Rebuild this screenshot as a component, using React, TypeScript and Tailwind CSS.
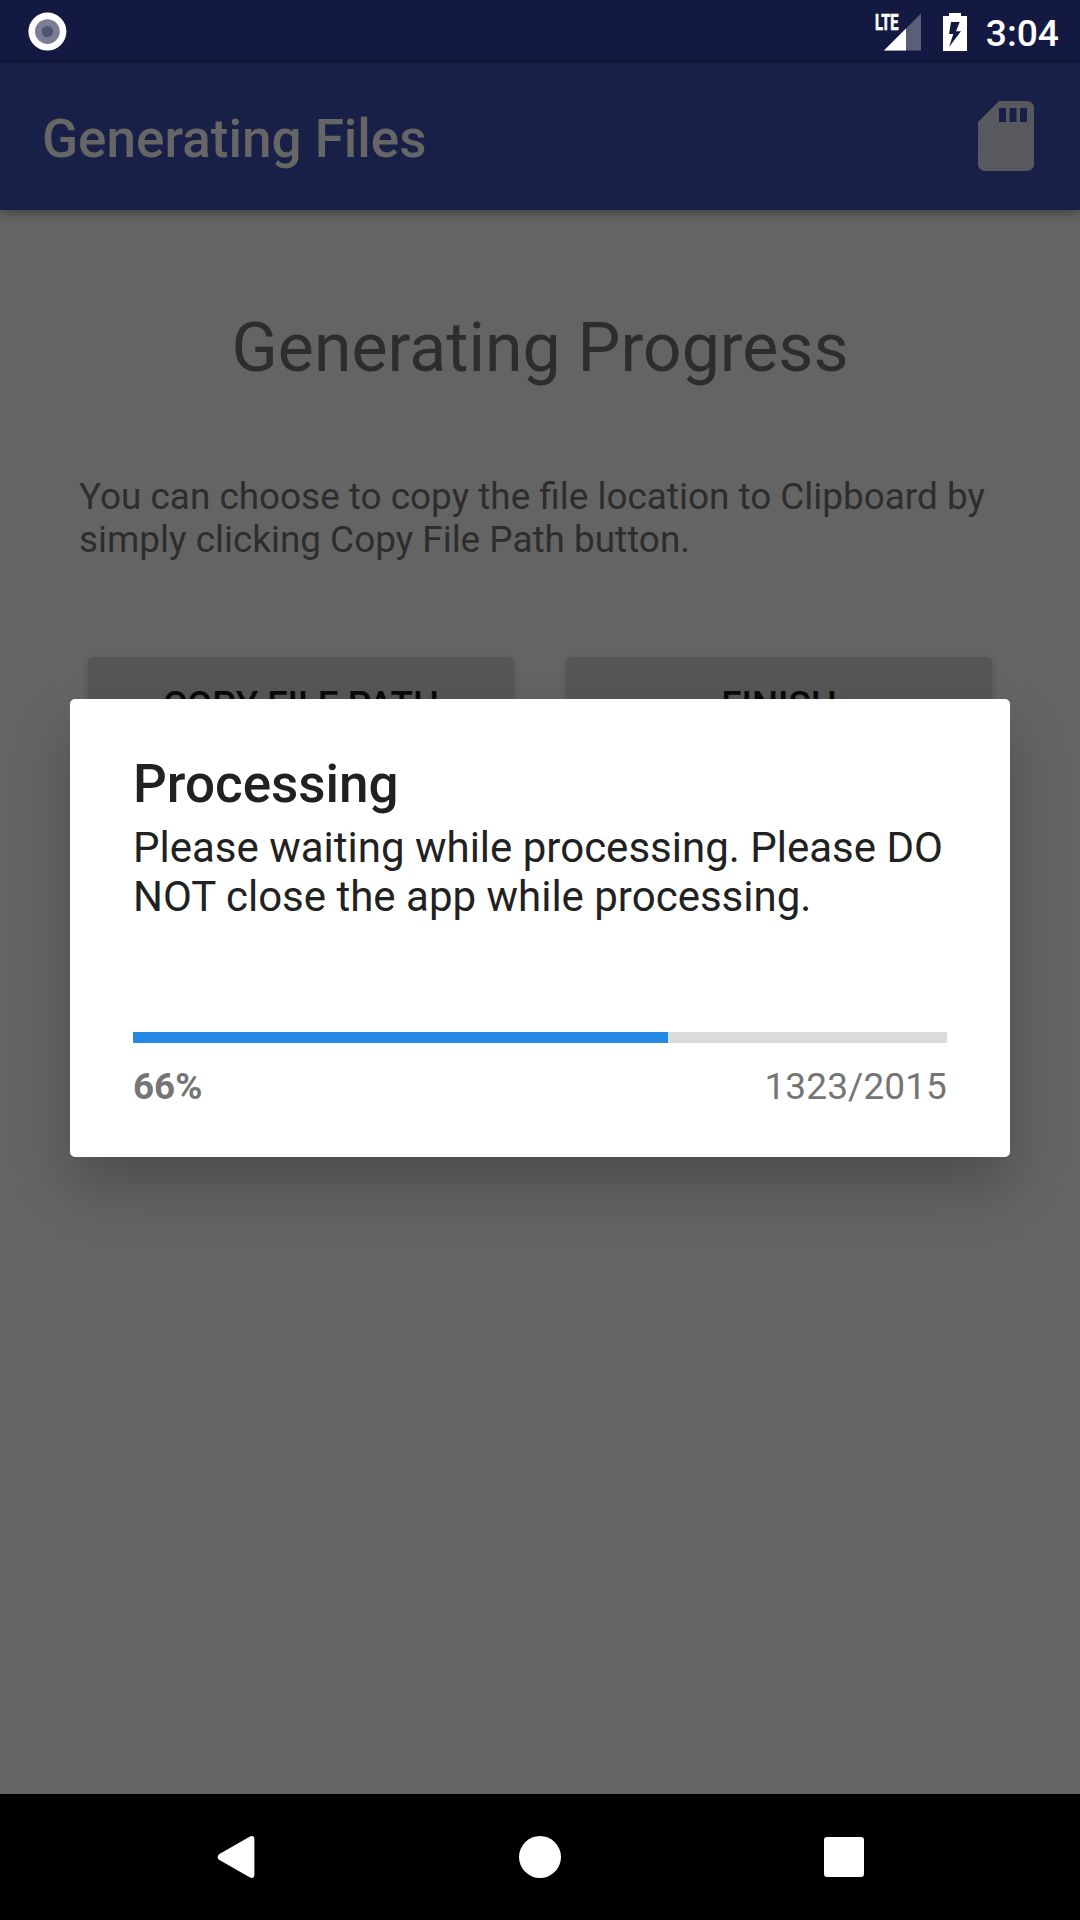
const done = 1323;
const total = 2015;

function StatusBar() {
  return (
    <div className="flex h-[63px] items-center justify-between bg-[#131940] pl-7 pr-[21px]">
      <svg className="h-[40px] w-[40px]" viewBox="0 0 40 40">
        <circle cx="19.4" cy="19.6" r="19" fill="#fff" />
        <circle cx="19.4" cy="19.6" r="12.4" fill="#7c7e96" />
        <circle cx="19.4" cy="19.6" r="5.7" fill="#515475" />
      </svg>
      <div className="flex h-full items-center">
        <svg className="mr-[22px] h-[54px] w-[46px] overflow-visible" viewBox="0 -8 46 54">
          <path d="M46 0.5V37.5H9Z" fill="#5a5e79" />
          <path d="M31 15.5V37.5H9Z" fill="#fff" />
          <text
            x="0"
            y="17.3"
            fill="#fff"
            stroke="#fff"
            strokeWidth="0.7"
            className="text-[22.5px] font-bold"
            transform="scale(0.65 1)"
          >
            LTE
          </text>
        </svg>
        <svg className="mr-[18.5px] h-[38px] w-[24px]" viewBox="0 0 24 38">
          <path
            fill="#fff"
            fillRule="evenodd"
            d="M6 0H18V3H24V38H0V3H6ZM8 9L6 21H10.300L6 34L18 18.300H13L16.700 9Z"
          />
        </svg>
        <span className="pt-[3px] text-[37.2px] leading-[43px] font-medium text-white">3:04</span>
      </div>
    </div>
  );
}

function AppBar() {
  return (
    <header className="relative z-10 flex h-[147px] items-center justify-between bg-[#192048] pr-8 pl-[42px] shadow-[0_3px_10px_rgba(0,0,0,0.35)]">
      <h1 className="pt-[5px] text-[53px] leading-[62px] font-medium text-[#666]">Generating Files</h1>
      <svg className="mb-[2px] h-[84px] w-[84px]" viewBox="0 0 24 24" fill="#58585f">
        <path d="M18 2h-8L4.02 8 4 20c0 1.1.9 2 2 2h12c1.1 0 2-.9 2-2V4c0-1.1-.9-2-2-2zm-6 6h-2V4h2v4zm3 0h-2V4h2v4zm3 0h-2V4h2v4z" />
      </svg>
    </header>
  );
}

function RaisedButton({ label }: { label: string }) {
  return (
    <button className="h-[95px] flex-1 rounded-[5px] bg-[#565656] pt-[1px] text-[36.75px] font-medium text-[#0a0a0a] shadow-[0_3px_6px_rgba(0,0,0,0.2)]">
      {label}
    </button>
  );
}

function ProgressDialog() {
  return (
    <section className="absolute top-[699px] left-[70px] flex h-[458px] w-[940px] flex-col rounded-[5px] bg-white px-[63px] pt-[54px] shadow-[0_30px_60px_-2px_rgba(0,0,0,0.24)]">
      <h3 className="text-[53px] leading-[62px] font-medium text-[#212121]">Processing</h3>
      <p className="mt-[8px] text-[42px] leading-[49px] text-[#212121]">
        Please waiting while processing. Please DO
        <br />
        NOT close the app while processing.
      </p>
      <div className="mt-[111px] h-[11px] bg-[#dbdbdb]">
        <div className="h-full bg-[#2488e5]" style={{ width: `${Math.ceil((done / total) * 814)}px` }} />
      </div>
      <div className="mt-[22px] flex justify-between text-[37px] leading-[43px] text-[#757575]">
        <span className="text-[36.75px] font-bold">66%</span>
        <span className="tracking-[0.1px]">
          {done}/{total}
        </span>
      </div>
    </section>
  );
}

function NavBar() {
  return (
    <nav className="flex h-[126px] items-center justify-between bg-black pr-[216px] pl-[217px]">
      <svg className="h-[42px] w-[38px]" viewBox="0 0 38 42" fill="#fff">
        <path d="M2 18.2L33 0.4Q37.400 -1 37.400 3.500V38.500Q37.400 43 33 41.600L2 23.800Q-0.800 21 2 18.200Z" />
      </svg>
      <div className="h-[42px] w-[42px] rounded-full bg-white" />
      <div className="h-[40px] w-[40px] rounded-[3px] bg-white" />
    </nav>
  );
}

export default function App() {
  return (
    <div className="relative flex h-[1920px] w-[1080px] flex-col overflow-hidden bg-[#646464] font-['Roboto',sans-serif]">
      <StatusBar />
      <AppBar />
      <main className="flex flex-1 flex-col px-[79px] pt-[98px]">
        <h2 className="text-center text-[68px] leading-[80px] text-[#2d2d2d]">Generating Progress</h2>
        <p className="mt-[87px] text-[36.9px] leading-[43px] whitespace-nowrap text-[#2d2d2d]">
          You can choose to copy the file location to Clipboard by
          <br />
          simply clicking Copy File Path button.
        </p>
        <div className="mt-[96px] flex gap-[52px] px-[9px]">
          <RaisedButton label="COPY FILE PATH" />
          <RaisedButton label="FINISH" />
        </div>
      </main>
      <NavBar />
      <ProgressDialog />
    </div>
  );
}
